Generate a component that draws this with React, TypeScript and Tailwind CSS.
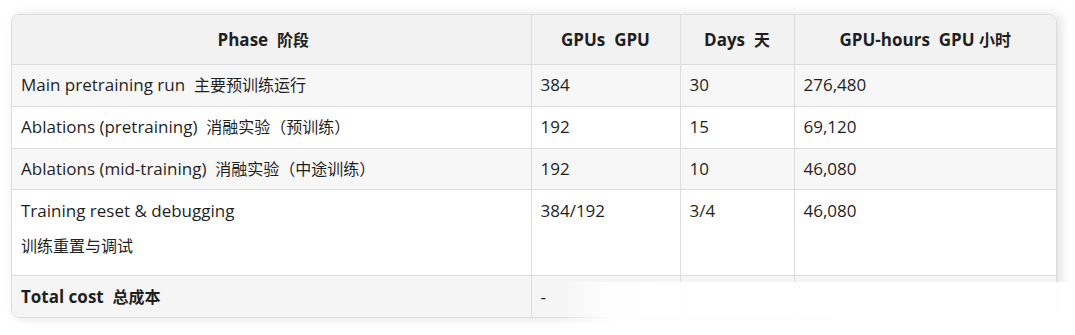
import React from "react";

const B = "border-[#dcdcdc]";

const rows = [
  { bg: "bg-[#f7f7f7]", h: "h-[42px]", en: "Main pretraining run", zh: "主要预训练运行", gpus: "384", days: "30", hours: "276,480" },
  { bg: "bg-white", h: "h-[42px]", en: "Ablations (pretraining)", zh: "消融实验（预训练）", gpus: "192", days: "15", hours: "69,120" },
  { bg: "bg-[#f7f7f7]", h: "h-[41px]", en: "Ablations (mid-training)", zh: "消融实验（中途训练）", gpus: "192", days: "10", hours: "46,080" },
];

function Zh({ children }: { children: React.ReactNode }) {
  return <span className="text-[16px]">{children}</span>;
}

export default function App() {
  const font = { fontFamily: '"Open Sans", "Noto Sans CJK SC", sans-serif' };
  return (
    <div className="w-[1075px] h-[335px] bg-white pt-[14px] pl-[11px] relative overflow-hidden" style={font}>
      <div className="w-[1046px] rounded-[8px] border border-[#dcdcdc] overflow-hidden shadow-[4px_0_12px_rgba(0,0,0,0.12)] text-[17px] text-[#1f1f1f]">
        <table className="w-full border-collapse table-fixed">
          <colgroup>
            <col className="w-[519px]" />
            <col className="w-[149px]" />
            <col className="w-[114px]" />
            <col />
          </colgroup>
          <thead>
            <tr className="bg-[#f2f2f2] h-[49px]">
              <th className={`font-bold text-center border-r border-b ${B} pr-[16px]`}>Phase&nbsp; <Zh>阶段</Zh></th>
              <th className={`font-bold text-center border-r border-b ${B}`}>GPUs&nbsp; GPU</th>
              <th className={`font-bold text-center border-r border-b ${B}`}>Days&nbsp; <Zh>天</Zh></th>
              <th className={`font-bold text-center border-b ${B}`}>GPU-hours&nbsp; GPU <Zh>小时</Zh></th>
            </tr>
          </thead>
          <tbody>
            {rows.map((r, i) => (
              <tr key={i} className={`${r.bg} ${r.h}`}>
                <td className={`px-[9px] border-r border-b ${B}`}>{r.en}&nbsp; <Zh>{r.zh}</Zh></td>
                <td className={`px-[9px] border-r border-b ${B}`}>{r.gpus}</td>
                <td className={`px-[9px] border-r border-b ${B}`}>{r.days}</td>
                <td className={`px-[9px] border-b ${B}`}>{r.hours}</td>
              </tr>
            ))}
            <tr className="bg-white h-[86px] align-top">
              <td className={`px-[9px] pt-[10px] border-r border-b ${B} leading-[22px]`}>
                <div>Training reset &amp; debugging</div>
                <div className="mt-[13px]"><Zh>训练重置与调试</Zh></div>
              </td>
              <td className={`px-[9px] pt-[10px] border-r border-b ${B} leading-[22px]`}>384/192</td>
              <td className={`px-[9px] pt-[10px] border-r border-b ${B} leading-[22px]`}>3/4</td>
              <td className={`px-[9px] pt-[10px] border-b ${B} leading-[22px]`}>46,080</td>
            </tr>
            <tr className="bg-[#f5f5f5] h-[42px]">
              <td className={`px-[9px] font-bold border-r ${B}`}>Total cost&nbsp; <Zh>总成本</Zh></td>
              <td className={`px-[9px] border-r ${B}`}>-</td>
              <td className={`px-[9px] border-r ${B}`}></td>
              <td className="px-[9px]"></td>
            </tr>
          </tbody>
        </table>
      </div>
      <div className="absolute left-[560px] top-[282px] w-[520px] h-[60px] bg-[linear-gradient(to_right,rgba(255,255,255,0),rgba(255,255,255,0.95)_10%,rgba(255,255,255,0.97))]" />
    </div>
  );
}
